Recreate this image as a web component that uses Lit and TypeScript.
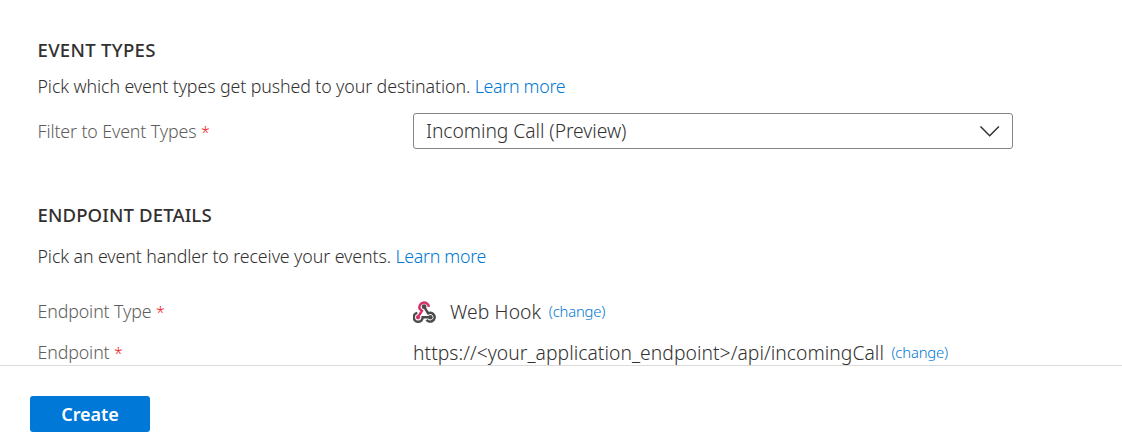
import { LitElement, html, css } from "lit";
import { customElement } from "lit/decorators.js";

@customElement("app-root")
export class AppRoot extends LitElement {
  static styles = css`
    :host {
      display: flex;
      flex-direction: column;
      height: 447px;
      box-sizing: border-box;
      overflow: hidden;
      background: #fff;
      color: #323130;
      font-family: "Noto Sans", "Open Sans", sans-serif;
      font-weight: 350;
      font-size: 17.8px;
      line-height: 24px;
      white-space: nowrap;
    }
    .content {
      height: 365px;
      box-sizing: border-box;
      padding: 38px 0 0 37.5px;
      overflow: hidden;
      flex: none;
    }
    h2 {
      margin: 0;
      font-size: 18.6px;
      font-weight: 550;
      line-height: 24px;
      letter-spacing: 0.28px;
    }
    p { margin: 0; letter-spacing: -0.1px; }
    p .link { letter-spacing: -0.3px; }
    .types-text { margin-top: 12px; }
    .details-text { margin-top: 17px; }
    .details-title { margin-top: 54px; letter-spacing: 0.1px; }
    .row {
      display: grid;
      grid-template-columns: 375.5px 600px;
      align-items: center;
    }
    .filter { margin-top: 15px; }
    .type { margin-top: 30px; }
    .endpoint { margin-top: 15px; }
    .label { color: #605e5c; letter-spacing: -0.12px; }
    .req { color: #f0191e; font-size: 16px; line-height: 1; }
    .link { color: #0078d4; text-decoration: none; }
    .select {
      display: flex;
      align-items: center;
      justify-content: space-between;
      height: 36px;
      box-sizing: border-box;
      border: 1px solid #868482;
      border-radius: 3px;
      padding: 0 11px 0 12px;
      font-size: 19.3px;
      letter-spacing: -0.06px;
    }
    .value {
      display: flex;
      align-items: center;
      font-size: 19.3px;
      line-height: 24px;
    }
    .hook { margin: 2px 14px 0 0; flex: none; }
    .hook-name { letter-spacing: 0.1px; padding-top: 2px; }
    .url { letter-spacing: 0.05px; padding-top: 2px; }
    .change { font-size: 14.8px; letter-spacing: -0.17px; margin-left: 7.5px; }
    .footer {
      flex: 1;
      border-top: 1px solid #dcdcdc;
      padding: 30px 30px 0;
    }
    .create {
      display: block;
      width: 120px;
      height: 36px;
      border: 0;
      border-radius: 3px;
      padding: 0;
      background: #0078d7;
      color: #fff;
      font-family: inherit;
      font-size: 18px;
      font-weight: 650;
      line-height: 36px;
      letter-spacing: -0.05px;
    }
  `;

  render() {
    return html`
      <div class="content">
        <h2>EVENT TYPES</h2>
        <p class="types-text">Pick which event types get pushed to your destination. <a class="link">Learn more</a></p>
        <div class="row filter">
          <span class="label">Filter to Event Types <span class="req">*</span></span>
          <div class="select">
            <span>Incoming Call (Preview)</span>
            <svg width="22" height="14" viewBox="0 0 22 14" fill="none" stroke="#323130" stroke-width="1.5">
              <path d="M1.5 2.5 L10.7 11.7 L19.9 2.5" />
            </svg>
          </div>
        </div>
        <h2 class="details-title">ENDPOINT DETAILS</h2>
        <p class="details-text">Pick an event handler to receive your events. <a class="link">Learn more</a></p>
        <div class="row type">
          <span class="label">Endpoint Type <span class="req">*</span></span>
          <div class="value">
            <svg class="hook" width="23" height="24" viewBox="0 0 23 24" fill="none" stroke-width="2.5">
              <path d="M6.6 9 A4.8 4.8 0 1 1 15.9 6.9" stroke="#d6336c" />
              <path d="M4.9 17.2 L8.9 10.8 Q7.3 9.8 6.6 8.4" stroke="#d6336c" />
              <path d="M11.2 6.8 L15.2 13.3 A4.4 4.4 0 1 1 13.6 19.7" stroke="#4b4b4b" />
              <path d="M4.3 12.9 A4.5 4.5 0 1 0 9.7 17.3 L17.4 17.3" stroke="#4b4b4b" />
              <circle cx="11.1" cy="6.7" r="2.4" fill="#4b4b4b" />
              <circle cx="5" cy="17.3" r="2.1" fill="#d6336c" />
              <circle cx="17.4" cy="17.3" r="2.2" fill="#4b4b4b" />
            </svg>
            <span class="hook-name">Web Hook</span>
            <a class="link change">(change)</a>
          </div>
        </div>
        <div class="row endpoint">
          <span class="label">Endpoint <span class="req">*</span></span>
          <div class="value">
            <span class="url">https://&lt;your_application_endpoint&gt;/api/incomingCall</span>
            <a class="link change">(change)</a>
          </div>
        </div>
      </div>
      <div class="footer"><button class="create">Create</button></div>
    `;
  }
}
